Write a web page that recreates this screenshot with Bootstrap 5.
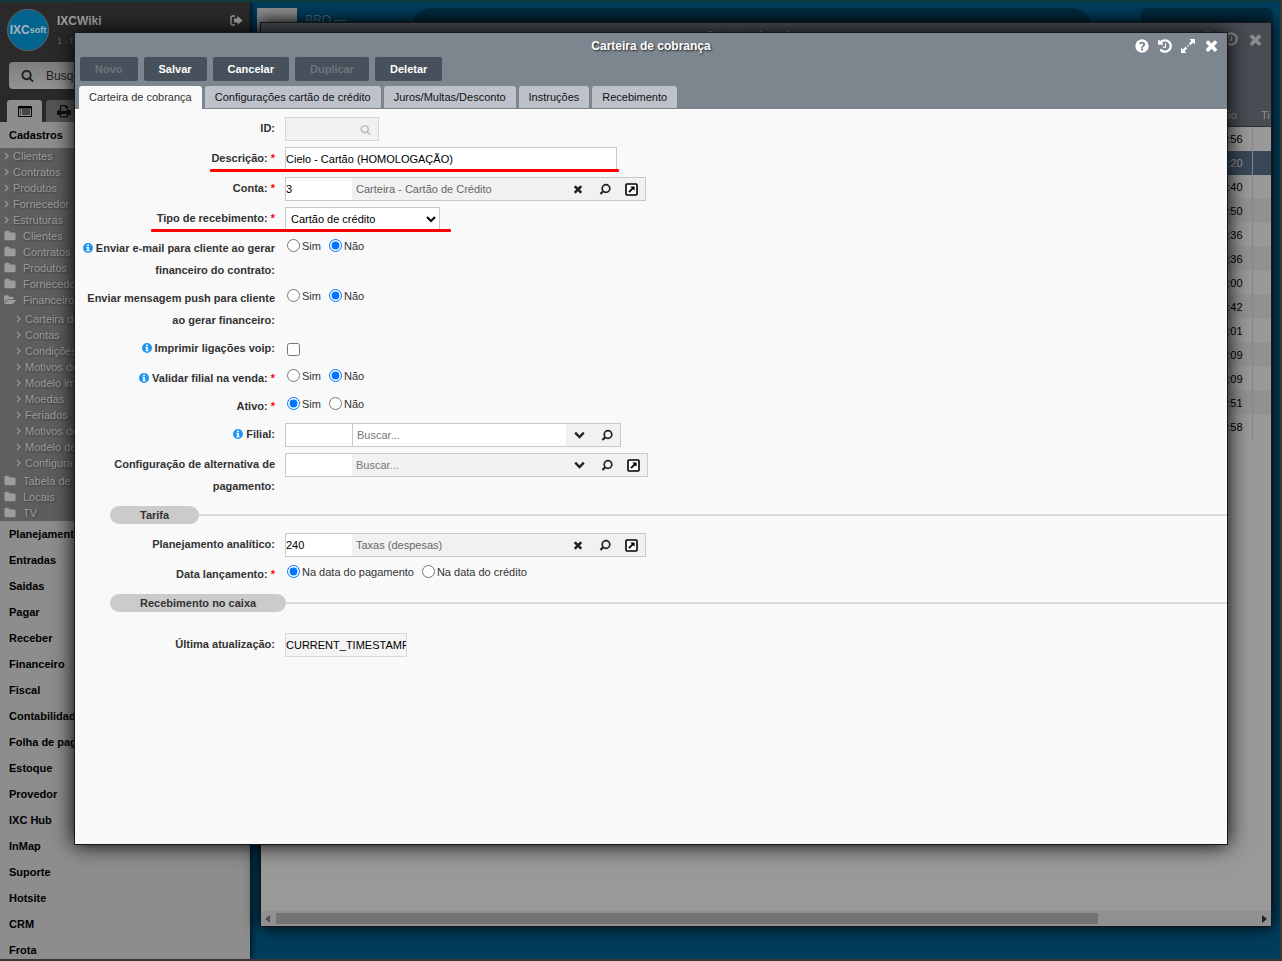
<!DOCTYPE html>
<html lang="pt-BR">
<head>
<meta charset="utf-8">
<meta name="viewport" content="width=device-width, initial-scale=1">
<title>Carteira de cobrança</title>
<link href="https://cdn.jsdelivr.net/npm/bootstrap@5.3.0/dist/css/bootstrap.min.css" rel="stylesheet">
<style>
body{font-family:"Liberation Sans",Arial,sans-serif;font-size:11px;line-height:16px;color:#333;background:#003e5d;height:100vh;border:solid #3a3638;border-width:2px 2px 2px 0;border-top-color:#0f3b3d;overflow:hidden}
a{color:inherit;text-decoration:none}
svg{fill:currentColor;display:block;flex:none}
button{font:inherit;color:inherit;border:0;background:none;padding:0}

/* desktop behind the windows */
.desk{padding:6px 7px 0}
.desk-logo{width:40px;height:60px;background:#8f8f8f}
.desk-name{color:#54788a;font-size:12px;padding:4px 8px}
.desk-panel{background:#002b41;border-radius:22px;height:60px}
.desk-panel.narrow{border-radius:6px;height:900px;width:13%}

/* sidebar */
.side{width:250px;background:#8d8d8d;box-shadow:0 0 8px #000;color:#000}
.side-head{background:#2a2a2a;height:120px}
.side-id{padding:7px 7px 0}
.avatar{width:42px;height:42px;background:#00648f;border:1px solid #5c6468;color:#a9b4ba;font-weight:bold;font-size:12px}
.avatar small{font-size:9px}
.side-user{color:#a3a3a3;font-size:12px;font-weight:bold}
.side-sub{color:#666;font-size:9px}
.side-search{background:linear-gradient(#7d7d7d,#939393);border-radius:4px;height:27px;margin:11px 9px 0;padding:0 8px;color:#222;font-size:12px}
.side-search input{background:none;border:0;outline:0;padding:0;width:100%;color:#222}
.side-search input::placeholder{color:#222;opacity:1}
.side-tabs{padding-left:7px}
.side-tab{width:35px;height:22px;border-radius:3px 3px 0 0;background:#555;color:#111}
.side-tab.on{background:#8d8d8d;color:#000}
.side-main{display:block;height:26px;line-height:26px;padding-left:9px;font-weight:bold}
.side-tree{background:#5e5e5e;color:#9c9c9c;text-shadow:1px 1px 2px #3a3a3a}
.side-tree a{display:flex;align-items:center;height:16px;padding-left:4px;white-space:nowrap}
.side-tree .leaf{gap:4px}
.side-tree .fold{gap:7px}
.side-tree .kids{margin:3px 0 2px 12px}

/* windows */
.win{position:absolute;border:1px solid #16181a}
.win-back{left:260px;right:8px;top:20px;bottom:32px;background:#999;box-shadow:0 0 16px #000}
.win-back .bar{height:104px;background:#484c53;border-bottom:1px solid #2c2f33;color:#8c8c8c}
.win-front{left:74px;right:52px;top:30px;bottom:114px;background:#f9f9f9;box-shadow:0 0 20px #000}
.win-title{font-size:12px;font-weight:bold;line-height:26px}
.win-front .bar{background:#7d868f}
.win-front .win-title{color:#fff;text-shadow:1px 1px 2px #222}
.win-tools{position:absolute;right:7px;top:4px}
.list{width:100%;color:#000;table-layout:fixed}
.list th{font-weight:normal;color:#8c8c8c;height:24px;text-align:right;padding:0 15px 0 0}
.list th.type,.list td.type{width:19px;white-space:nowrap;padding:0 0 0 9px;text-align:left}
.list td{height:24px;text-align:right;padding:0 9px 0 0}
.list td.type{border-left:1px solid #868686}
.list tbody tr:nth-child(even){background:#929292}
.list tbody tr.sel{background:#384757;color:#999}
.list-head{margin-top:-24px}
.hscroll{height:15px;background:#919191;color:#555}
.hscroll .thumb{height:11px;background:#737373;width:82%;margin-left:6px}

/* toolbar and tabs */
.tools{gap:6px;padding:0 5px 5px;margin-top:-2px}
.tool{height:24px;line-height:24px;padding:0 15px;background:#47515b;border-radius:2px;color:#fff;font-weight:bold}
.tool:disabled{color:#6c757d}
.tabs{gap:3px;padding-left:4px}
.tab-item{height:22px;line-height:22px;padding:0 10px;background:#bdc2ca;border-radius:3px 3px 0 0;color:#111}
.tab-item.on{height:23px;padding-bottom:1px;background:#f9f9f9;color:#333}

/* form */
.frm-row{display:grid;grid-template-columns:200px 1fr;column-gap:10px;padding-bottom:6px;position:relative}
.cap{font-weight:bold;line-height:22px;text-align:right}
.cap i{color:red;font-style:normal}
.cap svg{display:inline-block;color:#1e96f5;vertical-align:-1px}
.box{height:24px;border:1px solid #c9c9c9;background:#fff;padding:0;color:#000;font-size:11px;outline:0;border-radius:0}
.box-lg{width:332px}
.box-ro{width:122px;background:#f4f4f4;border-color:#d8d8d8}
.sel-box{width:155px;padding-left:1px}
.lookup{display:inline-flex;height:24px;border:1px solid #c9c9c9;background:#f1f1f1;color:#222}
.lookup input{border:0;outline:0;padding:0;background:none}
.lookup .code{width:66px;background:#fff;color:#000}
.lookup .text{width:212px;padding-left:4px;color:#666}
.lookup .text::placeholder{color:#777}
.lookup .text.wide{width:214px}
.lookup .text.open{background:#fff;border-left:1px solid #c9c9c9}
.lookup button{width:27px;display:flex;align-items:center;justify-content:center}
.lookup.off{border-color:#d6d6d6;color:#c0c0c0}
.lookup.off .code{background:#f1f1f1}
.lookup.off button{width:26px}
.opts{display:flex;gap:8px;padding:2px 0 0 2px;height:22px}
.opts label{display:flex;gap:2px;height:14px;line-height:15px}
.opts input{width:13px;height:13px}
.opts.tick{height:24px;padding-top:6px}
.sect{display:flex;align-items:center;height:30px;padding:3px 0 9px 35px}
.sect span{background:#cbcbcb;border-radius:9px;height:18px;line-height:18px;padding:0 30px;font-weight:bold}
.sect::after{content:"";flex:1;height:2px;background:#dadada}
.underline{position:absolute;height:3px;background:#f00;border-radius:1px;top:22px}
.underline.u-desc{left:135px;width:409px}
.underline.u-type{left:76px;width:300px}
</style>
</head>
<body class="d-flex position-relative">

<svg width="0" height="0" class="position-absolute" aria-hidden="true">
  <symbol id="times" viewBox="0 0 1792 1792"><path d="M1490 1322q0 40-28 68l-136 136q-28 28-68 28t-68-28l-294-294-294 294q-28 28-68 28t-68-28l-136-136q-28-28-28-68t28-68l294-294-294-294q-28-28-28-68t28-68l136-136q28-28 68-28t68 28l294 294 294-294q28-28 68-28t68 28l136 136q28 28 28 68t-28 68l-294 294 294 294q28 28 28 68z"/></symbol>
  <symbol id="search" viewBox="0 0 1792 1792"><path d="M1216 832q0-185-131.500-316.500t-316.500-131.500-316.500 131.500-131.500 316.500 131.500 316.500 316.500 131.500 316.500-131.500 131.500-316.500zm512 832q0 52-38 90t-90 38q-54 0-90-38l-343-342q-179 124-399 124-143 0-273.500-55.500t-225-150-150-225-55.500-273.500 55.500-273.500 150-225 225-150 273.500-55.500 273.500 55.500 225 150 150 225 55.500 273.500q0 220-124 399l343 343q37 37 37 90z"/></symbol>
  <symbol id="history" viewBox="0 0 1792 1792"><path d="M1664 896q0 156-61 298t-164 245-245 164-298 61q-172 0-327-72.500t-264-204.500q-7-10-6.500-22.500t8.500-20.500l137-138q10-9 25-9 16 2 23 12 73 95 179 147t225 52q104 0 198.500-40.500t163.500-109.500 109.500-163.500 40.500-198.500-40.500-198.500-109.500-163.500-163.500-109.500-198.500-40.500q-98 0-188 35.500t-160 101.500l137 138q31 30 14 69-17 40-59 40h-448q-26 0-45-19t-19-45v-448q0-42 40-59 39-17 69 14l130 129q107-101 244.500-156.500t284.500-55.500q156 0 298 61t245 164 164 245 61 298zm-640-288v448q0 14-9 23t-23 9h-320q-14 0-23-9t-9-23v-64q0-14 9-23t23-9h224v-352q0-14 9-23t23-9h64q14 0 23 9t9 23z"/></symbol>
  <symbol id="folder" viewBox="0 0 1792 1792"><path d="M1728 608v704q0 92-66 158t-158 66h-1216q-92 0-158-66t-66-158v-960q0-92 66-158t158-66h320q92 0 158 66t66 158v32h672q92 0 158 66t66 158z"/></symbol>
  <symbol id="folder-open" viewBox="0 0 1920 1792"><path d="M1879 952q0 31-31 66l-336 396q-43 51-120.500 86.500t-143.500 35.500h-1088q-34 0-60.500-13t-26.500-43q0-31 31-66l336-396q43-51 120.500-86.500t143.500-35.500h1088q34 0 60.500 13t26.500 43zm-343-344v160h-832q-94 0-197 47.500t-164 119.500l-337 396-5 6q0-4-.5-12.500t-.5-12.500v-960q0-92 66-158t158-66h320q92 0 158 66t66 158v32h544q92 0 158 66t66 158z"/></symbol>
  <symbol id="help" viewBox="0 0 14 14"><path fill-rule="evenodd" d="M7 .3a6.700 6.700 0 1 0 0 13.400A6.700 6.700 0 0 0 7 .3zM6 9.500h2v2H6zM6 8.700c0-2 2.100-2 2.100-3.300 0-1.300-2-1.300-2.600.1L3.900 4.400C5 1.900 10.200 2 10.200 5.200 10.200 7.200 8 7.400 8 8.700z"/></symbol>
  <symbol id="info" viewBox="0 0 14 14"><path fill-rule="evenodd" d="M7 0a7 7 0 1 0 0 14A7 7 0 0 0 7 0zM5.800 2.200h2.500v2H5.800zM4.800 5.400h3.500v4.400h1v1.800H4.800V9.800h1V7.200h-1z"/></symbol>
  <symbol id="expand" viewBox="0 0 14 14"><path d="M8.500 0H14v5.500l-1.900-1.900-2.600 2.600-1.700-1.700 2.600-2.600zM5.500 14H0V8.500l1.900 1.900 2.600-2.600 1.700 1.700-2.600 2.600zM6 7l1-1 1 1-1 1z"/></symbol>
  <symbol id="logout" viewBox="0 0 13 12"><path d="M5 1H2.500A1.500 1.500 0 0 0 1 2.500v6A1.500 1.500 0 0 0 2.500 10H5" fill="none" stroke="currentColor" stroke-width="1.300"/><path d="M7.500 1l5 4.500-5 4.500V7.500H4v-4h3.500z"/></symbol>
  <symbol id="chev" viewBox="0 0 5 8"><path d="M.8.8L4 4 .8 7.200" fill="none" stroke="currentColor" stroke-width="1.200"/></symbol>
  <symbol id="down" viewBox="0 0 11 8"><path d="M1.200 1.700L5.500 6l4.300-4.300" fill="none" stroke="currentColor" stroke-width="2.400"/></symbol>
  <symbol id="lens" viewBox="0 0 12 12"><circle cx="7" cy="5.500" r="3.800" fill="none" stroke="currentColor" stroke-width="1.700"/><path d="M4.200 8.200L1.400 11" stroke="currentColor" stroke-width="2.200"/></symbol>
  <symbol id="open" viewBox="0 0 13 13"><rect x="1" y="1" width="11" height="11" rx="1" fill="#fff" stroke="#000" stroke-width="1.600"/><path d="M5.200 3.400h4.400v4.400L8.100 6.300 4.600 9.800 3.300 8.500l3.500-3.500z" fill="#000"/></symbol>
  <symbol id="listing" viewBox="0 0 14 11"><path fill-rule="evenodd" d="M1 0h12a1 1 0 0 1 1 1v9a1 1 0 0 1-1 1H1a1 1 0 0 1-1-1V1a1 1 0 0 1 1-1zM1 2.500V10h12V2.500z"/><path d="M2 3.500h1v1H2zm2 0h8v1H4zM2 5.500h1v1H2zm2 0h8v1H4zM2 7.500h1v1H2zm2 0h8v1H4z"/></symbol>
  <symbol id="print" viewBox="0 0 14 13"><path fill-rule="evenodd" d="M3 0h6l2 2v3h1.500A1.500 1.500 0 0 1 14 6.500V10h-3v2.500H3V10H0V6.500A1.500 1.500 0 0 1 1.500 5H3zM4.200 1.200V6h5.600V3H8V1.200zM4.200 9v2.300h5.600V9z"/></symbol>
</svg>

<nav class="side position-relative flex-shrink-0 overflow-hidden" aria-label="Menu">
  <div class="side-head d-flex flex-column">
    <div class="side-id d-flex">
      <div class="avatar rounded-circle d-flex align-items-center justify-content-center flex-shrink-0">IXC<small>soft</small></div>
      <div class="ps-2 flex-grow-1">
        <div class="d-flex justify-content-between align-items-center side-user pt-1"><span>IXCWiki</span><button aria-label="Sair"><svg width="13" height="12"><use href="#logout"/></svg></button></div>
        <div class="side-sub pt-1">1 - IXC</div>
      </div>
    </div>
    <label class="side-search d-flex align-items-center gap-2"><svg class="mx-1" width="13" height="13"><use href="#search"/></svg><input type="search" placeholder="Busque" aria-label="Buscar no menu"></label>
    <div class="side-tabs d-flex gap-1 mt-auto">
      <button class="side-tab on d-flex align-items-center justify-content-center" aria-label="Menu"><svg width="14" height="11"><use href="#listing"/></svg></button>
      <button class="side-tab d-flex align-items-center justify-content-center" aria-label="Imprimir"><svg width="14" height="13"><use href="#print"/></svg></button>
    </div>
  </div>
  <a class="side-main" href="#">Cadastros</a>
  <div class="side-tree">
    <a class="leaf" href="#"><svg width="5" height="8"><use href="#chev"/></svg>Clientes</a>
    <a class="leaf" href="#"><svg width="5" height="8"><use href="#chev"/></svg>Contratos</a>
    <a class="leaf" href="#"><svg width="5" height="8"><use href="#chev"/></svg>Produtos</a>
    <a class="leaf" href="#"><svg width="5" height="8"><use href="#chev"/></svg>Fornecedor</a>
    <a class="leaf" href="#"><svg width="5" height="8"><use href="#chev"/></svg>Estruturas</a>
    <a class="fold" href="#"><svg width="12" height="12"><use href="#folder"/></svg>Clientes</a>
    <a class="fold" href="#"><svg width="12" height="12"><use href="#folder"/></svg>Contratos</a>
    <a class="fold" href="#"><svg width="12" height="12"><use href="#folder"/></svg>Produtos</a>
    <a class="fold" href="#"><svg width="12" height="12"><use href="#folder"/></svg>Fornecedor</a>
    <a class="fold" href="#"><svg width="12" height="12"><use href="#folder-open"/></svg>Financeiro</a>
    <div class="kids">
      <a class="leaf" href="#"><svg width="5" height="8"><use href="#chev"/></svg>Carteira de</a>
      <a class="leaf" href="#"><svg width="5" height="8"><use href="#chev"/></svg>Contas</a>
      <a class="leaf" href="#"><svg width="5" height="8"><use href="#chev"/></svg>Condições</a>
      <a class="leaf" href="#"><svg width="5" height="8"><use href="#chev"/></svg>Motivos de</a>
      <a class="leaf" href="#"><svg width="5" height="8"><use href="#chev"/></svg>Modelo imp</a>
      <a class="leaf" href="#"><svg width="5" height="8"><use href="#chev"/></svg>Moedas</a>
      <a class="leaf" href="#"><svg width="5" height="8"><use href="#chev"/></svg>Feriados</a>
      <a class="leaf" href="#"><svg width="5" height="8"><use href="#chev"/></svg>Motivos de</a>
      <a class="leaf" href="#"><svg width="5" height="8"><use href="#chev"/></svg>Modelo de</a>
      <a class="leaf" href="#"><svg width="5" height="8"><use href="#chev"/></svg>Configuraç</a>
    </div>
    <a class="fold" href="#"><svg width="12" height="12"><use href="#folder"/></svg>Tabela de</a>
    <a class="fold" href="#"><svg width="12" height="12"><use href="#folder"/></svg>Locais</a>
    <a class="fold" href="#"><svg width="12" height="12"><use href="#folder"/></svg>TV</a>
  </div>
  <a class="side-main" href="#">Planejamento</a>
  <a class="side-main" href="#">Entradas</a>
  <a class="side-main" href="#">Saidas</a>
  <a class="side-main" href="#">Pagar</a>
  <a class="side-main" href="#">Receber</a>
  <a class="side-main" href="#">Financeiro</a>
  <a class="side-main" href="#">Fiscal</a>
  <a class="side-main" href="#">Contabilidade</a>
  <a class="side-main" href="#">Folha de pag.</a>
  <a class="side-main" href="#">Estoque</a>
  <a class="side-main" href="#">Provedor</a>
  <a class="side-main" href="#">IXC Hub</a>
  <a class="side-main" href="#">InMap</a>
  <a class="side-main" href="#">Suporte</a>
  <a class="side-main" href="#">Hotsite</a>
  <a class="side-main" href="#">CRM</a>
  <a class="side-main" href="#">Frota</a>
</nav>

<div class="desk flex-grow-1 d-flex align-items-start overflow-hidden">
  <div class="desk-logo"></div>
  <div class="desk-name me-2 flex-shrink-0">BRO —</div>
  <div class="desk-panel flex-grow-1 mx-5"></div>
  <div class="desk-panel narrow flex-shrink-0"></div>
</div>

<section class="win win-back d-flex flex-column" aria-label="Lista">
  <div class="bar text-center win-title flex-shrink-0">Carteira de cobrança
    <div class="win-tools d-flex gap-2 pt-1"><svg width="14" height="14"><use href="#help"/></svg><svg width="16" height="16"><use href="#history"/></svg><svg width="17" height="17"><use href="#times"/></svg></div>
  </div>
  <table class="list list-head">
    <thead><tr><th>ão</th><th class="type">Ti</th></tr></thead>
    <tbody>
      <tr><td>:56</td><td class="type"></td></tr>
      <tr class="sel"><td>:20</td><td class="type"></td></tr>
      <tr><td>:40</td><td class="type"></td></tr>
      <tr><td>:50</td><td class="type"></td></tr>
      <tr><td>:36</td><td class="type"></td></tr>
      <tr><td>:36</td><td class="type"></td></tr>
      <tr><td>:00</td><td class="type"></td></tr>
      <tr><td>:42</td><td class="type"></td></tr>
      <tr><td>:01</td><td class="type"></td></tr>
      <tr><td>:09</td><td class="type"></td></tr>
      <tr><td>:09</td><td class="type"></td></tr>
      <tr><td>:51</td><td class="type"></td></tr>
      <tr><td>:58</td><td class="type"></td></tr>
    </tbody>
  </table>
  <div class="hscroll mt-auto d-flex align-items-center px-1 flex-shrink-0">
    <svg width="5" height="8" viewBox="0 0 5 8"><path d="M5 0v8L0 4z"/></svg>
    <div class="thumb me-auto"></div>
    <svg width="5" height="8" viewBox="0 0 5 8"><path d="M0 0v8l5-4z" fill="#222"/></svg>
  </div>
</section>

<main class="win win-front">
  <header class="bar">
    <h1 class="win-title text-center mb-0">Carteira de cobrança</h1>
    <div class="win-tools d-flex align-items-center text-white">
      <button class="me-2" aria-label="Ajuda"><svg width="14" height="14"><use href="#help"/></svg></button>
      <button class="me-2" aria-label="Histórico"><svg width="16" height="16"><use href="#history"/></svg></button>
      <button class="me-2" aria-label="Expandir"><svg width="14" height="14"><use href="#expand"/></svg></button>
      <button aria-label="Fechar"><svg width="17" height="17"><use href="#times"/></svg></button>
    </div>
    <div class="tools d-flex">
      <button class="tool" disabled>Novo</button><button class="tool">Salvar</button><button class="tool">Cancelar</button><button class="tool" disabled>Duplicar</button><button class="tool">Deletar</button>
    </div>
    <div class="tabs d-flex" role="tablist">
      <button class="tab-item on" role="tab" aria-selected="true">Carteira de cobrança</button><button class="tab-item" role="tab">Configurações cartão de crédito</button><button class="tab-item" role="tab">Juros/Multas/Desconto</button><button class="tab-item" role="tab">Instruções</button><button class="tab-item" role="tab">Recebimento</button>
    </div>
  </header>

  <form class="pt-2">
    <div class="frm-row"><label class="cap" for="f-id">ID:</label>
      <div class="d-flex"><div class="lookup off"><input class="code" id="f-id" type="text" disabled><button type="button" disabled aria-label="Pesquisar"><svg width="11" height="11"><use href="#search"/></svg></button></div></div></div>
    <div class="frm-row"><label class="cap" for="f-desc">Descrição: <i>*</i></label>
      <input class="box box-lg" id="f-desc" type="text" value="Cielo - Cartão (HOMOLOGAÇÃO)"><span class="underline u-desc"></span></div>
    <div class="frm-row"><label class="cap" for="f-conta">Conta: <i>*</i></label>
      <div class="d-flex"><div class="lookup"><input class="code" id="f-conta" type="text" value="3"><input class="text" type="text" value="Carteira - Cartão de Crédito" readonly aria-label="Nome da conta"><button type="button" aria-label="Limpar"><svg width="12" height="12"><use href="#times"/></svg></button><button type="button" aria-label="Pesquisar"><svg width="12" height="12"><use href="#lens"/></svg></button><button type="button" aria-label="Abrir"><svg width="13" height="13"><use href="#open"/></svg></button></div></div></div>
    <div class="frm-row"><label class="cap" for="f-tipo">Tipo de recebimento: <i>*</i></label>
      <select class="box sel-box" id="f-tipo"><option>Cartão de crédito</option></select><span class="underline u-type"></span></div>
    <div class="frm-row"><span class="cap" id="l-mail"><svg width="10" height="10"><use href="#info"/></svg> Enviar e-mail para cliente ao gerar financeiro do contrato:</span>
      <div class="opts" role="radiogroup" aria-labelledby="l-mail"><label><input type="radio" name="mail">Sim</label><label><input type="radio" name="mail" checked>Não</label></div></div>
    <div class="frm-row"><span class="cap" id="l-push">Enviar mensagem push para cliente ao gerar financeiro:</span>
      <div class="opts" role="radiogroup" aria-labelledby="l-push"><label><input type="radio" name="push">Sim</label><label><input type="radio" name="push" checked>Não</label></div></div>
    <div class="frm-row"><label class="cap" for="f-voip"><svg width="10" height="10"><use href="#info"/></svg> Imprimir ligações voip:</label>
      <div class="opts tick"><input id="f-voip" type="checkbox"></div></div>
    <div class="frm-row"><span class="cap" id="l-val"><svg width="10" height="10"><use href="#info"/></svg> Validar filial na venda: <i>*</i></span>
      <div class="opts" role="radiogroup" aria-labelledby="l-val"><label><input type="radio" name="val">Sim</label><label><input type="radio" name="val" checked>Não</label></div></div>
    <div class="frm-row"><span class="cap" id="l-ativo">Ativo: <i>*</i></span>
      <div class="opts" role="radiogroup" aria-labelledby="l-ativo"><label><input type="radio" name="ativo" checked>Sim</label><label><input type="radio" name="ativo">Não</label></div></div>
    <div class="frm-row"><label class="cap" for="f-filial"><svg width="10" height="10"><use href="#info"/></svg> Filial:</label>
      <div class="d-flex"><div class="lookup"><input class="code" id="f-filial" type="text"><input class="text wide open" type="text" placeholder="Buscar..." aria-label="Buscar filial"><button type="button" aria-label="Opções"><svg width="11" height="8"><use href="#down"/></svg></button><button type="button" aria-label="Pesquisar"><svg width="12" height="12"><use href="#lens"/></svg></button></div></div></div>
    <div class="frm-row"><label class="cap" for="f-alt">Configuração de alternativa de pagamento:</label>
      <div class="d-flex"><div class="lookup"><input class="code" id="f-alt" type="text"><input class="text wide" type="text" placeholder="Buscar..." aria-label="Buscar configuração"><button type="button" aria-label="Opções"><svg width="11" height="8"><use href="#down"/></svg></button><button type="button" aria-label="Pesquisar"><svg width="12" height="12"><use href="#lens"/></svg></button><button type="button" aria-label="Abrir"><svg width="13" height="13"><use href="#open"/></svg></button></div></div></div>
    <div class="sect"><span>Tarifa</span></div>
    <div class="frm-row"><label class="cap" for="f-plan">Planejamento analítico:</label>
      <div class="d-flex"><div class="lookup"><input class="code" id="f-plan" type="text" value="240"><input class="text" type="text" value="Taxas (despesas)" readonly aria-label="Nome do planejamento"><button type="button" aria-label="Limpar"><svg width="12" height="12"><use href="#times"/></svg></button><button type="button" aria-label="Pesquisar"><svg width="12" height="12"><use href="#lens"/></svg></button><button type="button" aria-label="Abrir"><svg width="13" height="13"><use href="#open"/></svg></button></div></div></div>
    <div class="frm-row"><span class="cap" id="l-data">Data lançamento: <i>*</i></span>
      <div class="opts" role="radiogroup" aria-labelledby="l-data"><label><input type="radio" name="data" checked>Na data do pagamento</label><label><input type="radio" name="data">Na data do crédito</label></div></div>
    <div class="sect mb-2"><span>Recebimento no caixa</span></div>
    <div class="frm-row pt-1"><label class="cap" for="f-upd">Última atualização:</label>
      <input class="box box-ro" id="f-upd" type="text" value="CURRENT_TIMESTAMP" readonly></div>
  </form>
</main>
<script src="https://cdn.jsdelivr.net/npm/bootstrap@5.3.0/dist/js/bootstrap.bundle.min.js"></script>
</body>
</html>
